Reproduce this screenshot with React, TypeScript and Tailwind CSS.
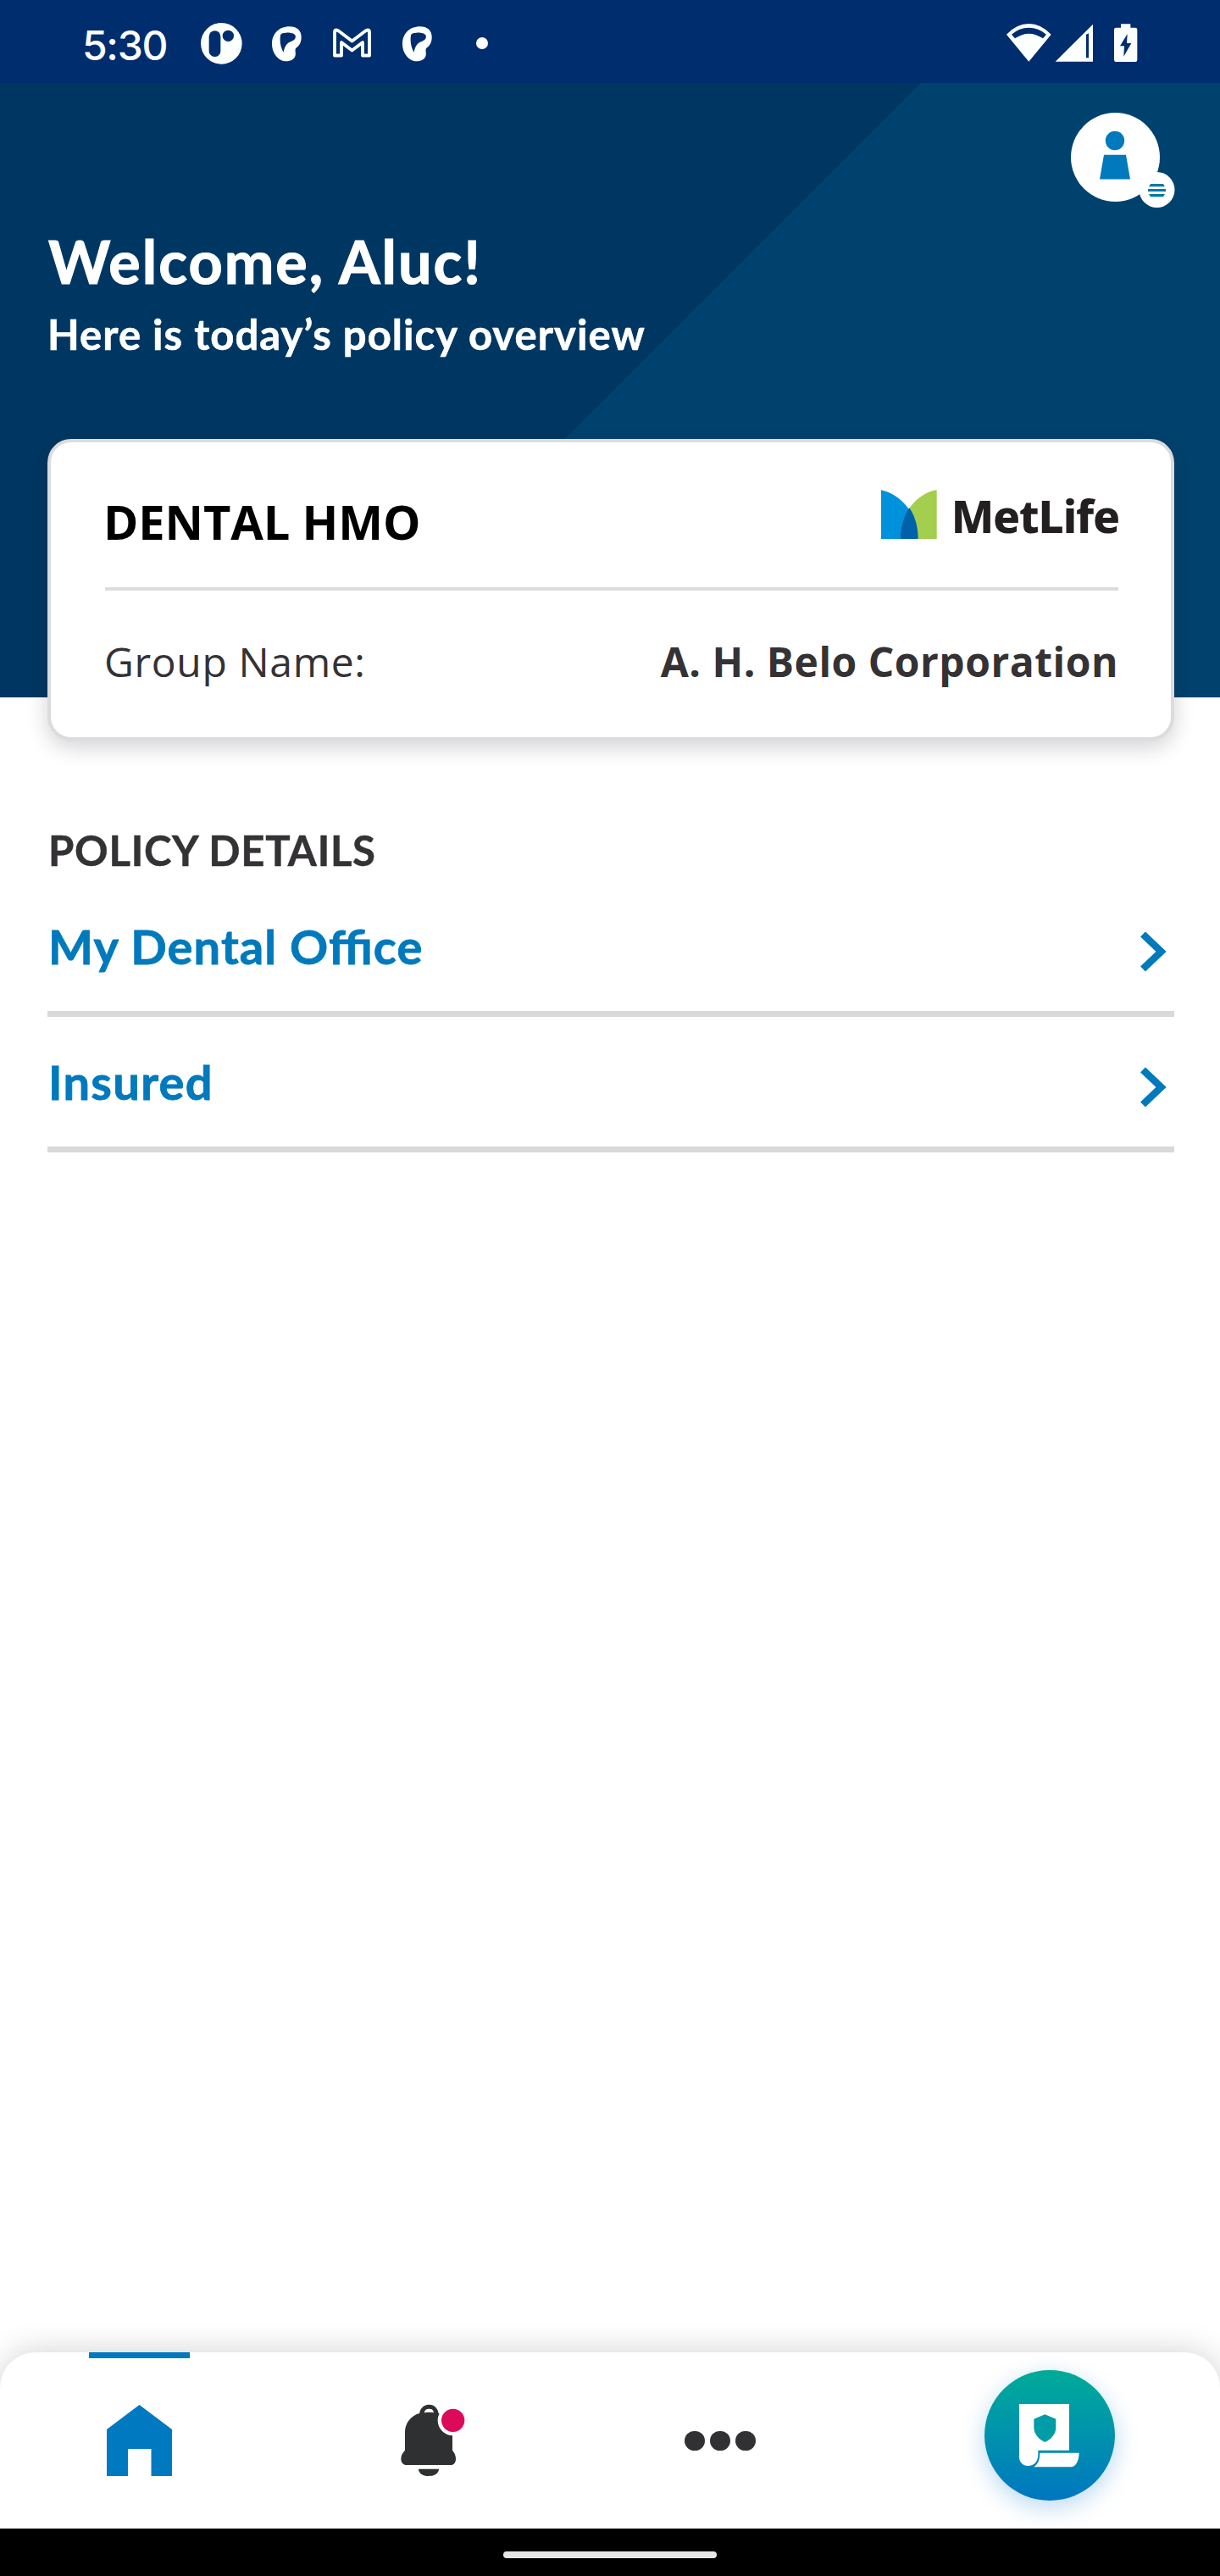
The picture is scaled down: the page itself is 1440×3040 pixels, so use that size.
function PandoraIcon() {
  return (
    <svg className="ml-[41px] h-[98px] w-[50px]" viewBox="468 0 150 294" fill="#fbfffe">
      <circle cx="544" cy="154" r="73" />
      <rect x="500" y="109" width="41" height="92" rx="20" fill="#002d6d" />
      <circle cx="568" cy="127" r="20" fill="#002d6d" />
    </svg>
  );
}

function BlobIcon({ className }: { className: string }) {
  return (
    <svg className={className} viewBox="720 0 110 294">
      <path
        fill="#fbfffe"
        fillRule="evenodd"
        d="M785 94C812 94 827 108 827 132C827 152 818 164 808 170C803 175 808 184 806 196C803 210 790 217 773 217C748 217 723 190 723 155C723 120 748 94 785 94ZM753 124C750 146 753 168 764 185C768 160 778 151 792 146C804 142 808 135 806 126C802 118 787 115 773 116C762 116 756 118 753 124Z"
      />
    </svg>
  );
}

function GmailIcon() {
  return (
    <svg className="ml-[34.300px] h-[98px] w-[48px]" viewBox="391 0 48 98" fill="none">
      <path
        d="M395 65.5V37.5Q395 34.5 399 36L415.5 48.5L432 36Q436 34.5 436 37.5V65.5H428V50L415.5 59.5L403 50V65.5Z"
        stroke="#fbfffe"
        strokeWidth="3.8"
        strokeLinejoin="round"
      />
    </svg>
  );
}

function StatusBar() {
  return (
    <div className="flex h-[98px] shrink-0 items-center bg-[#002d6d] pl-[97px]">
      <div className="mt-[9px] w-[98px] text-[48px] leading-[60px] font-medium tracking-[-1.3px] whitespace-nowrap text-white">5:30</div>
      <PandoraIcon />
      <BlobIcon className="ml-[34px] h-[98px] w-[36.7px]" />
      <GmailIcon />
      <BlobIcon className="ml-[35.300px] h-[98px] w-[36.7px]" />
      <div className="mt-[4px] ml-[51px] size-[14px] rounded-full bg-white" />
      <svg className="mr-[94px] ml-auto h-[98px] w-[160px]" viewBox="78 0 480 294" fill="#fbfffe">
        <path fillRule="evenodd" d="M84 122Q120 84 163 84T242 122L163 218ZM102 122L114 136Q163 102 213 136L225 122Q198 98 163 98T102 122Z" />
        <path fillRule="evenodd" d="M390 86V218H257ZM366 122V205H375V118Z" />
        <path fillRule="evenodd" d="M489 85H523V98H540Q547 98 547 105V212Q547 219 540 219H472Q465 219 465 212V105Q465 98 472 98H489ZM512 120L486 163H501L499 200L526 153H510Z" />
      </svg>
    </div>
  );
}

function Avatar() {
  return (
    <svg className="mr-[53px] ml-auto block h-[113px] w-[124px]" viewBox="1263 133 124 113">
      <circle cx="1316.5" cy="185.5" r="52.5" fill="#fff" />
      <circle cx="1316" cy="166" r="11.2" fill="#0079bd" />
      <path d="M1303 182.700H1329L1334 211.500H1298Z" fill="#0079bd" />
      <circle cx="1365.500" cy="224" r="21" fill="#fff" />
      <path d="M1358 217H1373L1375 220.200H1356ZM1355 223H1376V226H1355ZM1356 229H1375L1373 232.200H1358Z" fill="#0079a8" />
    </svg>
  );
}

function MetLifeLogo() {
  return (
    <div className="-mr-[1px] flex h-[64px] items-center">
      <svg className="h-[58.700px] w-[65.700px]" viewBox="180 233 197 176">
        <path d="M180 234C240 245 311 310 311 409H180Z" fill="#0091dc" />
        <path d="M377 233C310 245 248 310 248 409H377Z" fill="#a4ce4e" />
        <path d="M280 297C300 327 311 364 311 409H248C248 366 259 327 280 297Z" fill="#0061ab" />
      </svg>
      <div className="mt-[3px] ml-[17px] font-['Noto_Sans',sans-serif] text-[53px] leading-[64px] font-extrabold tracking-[-1.150px] whitespace-nowrap text-[#231f20]">MetLife</div>
    </div>
  );
}

function PolicyCard() {
  return (
    <div className="relative mx-[56px] -mt-[305px] mr-[54px] h-[356px] rounded-[28px] border-4 border-[#dcdbde] bg-white pr-[62px] pl-[64px] font-['Open_Sans',sans-serif] shadow-[0_8px_24px_rgba(40,30,45,0.2)]">
      <div className="flex h-[171px] items-start justify-between pt-[53px]">
        <div className="-ml-[2px] pt-[2px] text-[56px] leading-[76px] font-bold tracking-[-0.15px] text-black">DENTAL HMO</div>
        <MetLifeLogo />
      </div>
      <div className="h-[4px] bg-[#dcdbde]" />
      <div className="flex justify-between pt-[52px] text-[48px] leading-[64px] tracking-[0.5px] text-[#343235]">
        <div className="-ml-[1px] tracking-[0.650px]">Group Name:</div>
        <div className="font-bold">A. H. Belo Corporation</div>
      </div>
    </div>
  );
}

function DetailRow({ label, className }: { label: string; className: string }) {
  return (
    <div className="flex h-[160px] items-center justify-between border-b-[7px] border-[#d9d9dc] pr-[7px] text-[#007abc]">
      <div className={className}>{label}</div>
      <svg className="mt-[12px] h-[50px] w-[34px]" viewBox="0 0 34 50" fill="none">
        <path d="M4 4.500L25.500 25L4 45.500" stroke="currentColor" strokeWidth="8.500" />
      </svg>
    </div>
  );
}

function BottomNav() {
  return (
    <nav className="relative flex h-[208px] shrink-0 items-start rounded-t-[42px] bg-white shadow-[0_0_38px_rgba(0,0,0,0.19)]">
      <div className="ml-[105px] flex w-[119px] flex-col items-center">
        <div className="h-[7px] w-full bg-[#0079c0]" />
        <svg className="mt-[55px] h-[84px] w-[77px]" viewBox="126 2838 77 84" fill="#0079c0">
          <path d="M164.500 2838L203 2867V2922H178.500V2890H151V2922H126V2867Z" />
        </svg>
      </div>
      <svg className="mt-[44px] ml-[226px] size-[120px]" viewBox="0 0 360 360" fill="#2f3032">
        <path d="M135 90C135 68 150 53 169 53S203 68 203 90Z" />
        <path d="M152 82Q154 68 169 68T186 82Q169 78 152 82Z" fill="#fff" />
        <path d="M135 84H203C235 95 252 120 252 150V215C258 222 264 232 264 245C264 258 257 267 246 267H90C78 267 70 258 70 245C70 232 76 224 84 215V150C84 120 105 92 135 84Z" />
        <path d="M132 281H204C204 295 190 306 168 306C146 306 132 295 132 281Z" />
        <circle cx="254" cy="109" r="54" fill="#fff" />
        <circle cx="254" cy="109" r="41" fill="#dd0a5c" />
      </svg>
      <div className="mt-[92.500px] ml-[238px] flex gap-[6.700px]">
        <div className="size-[23.500px] rounded-full bg-[#313033]" />
        <div className="size-[23.500px] rounded-full bg-[#313033]" />
        <div className="size-[23.500px] rounded-full bg-[#313033]" />
      </div>
      <div className="mt-[21px] mr-[124px] ml-auto size-[154px] rounded-full bg-linear-to-b from-[#00ab97] to-[#0076c0] shadow-[0_8px_28px_rgba(0,122,200,0.28)]">
        <svg className="size-[154px]" viewBox="96 81 462 462" fill="#fff">
          <path d="M219 201H396V365H286V378C286 405 272 420 250 420C232 420 219 408 219 388Z" />
          <path d="M292 374H431C431 400 420 424 400 424H270C285 415 292 400 292 374Z" />
          <path d="M310 238L349 254V285C349 308 330 328 310 336C290 328 271 308 271 285V254Z" fill="#009da6" />
        </svg>
      </div>
    </nav>
  );
}

export default function App() {
  return (
    <div className="flex h-[3040px] w-[1440px] flex-col overflow-hidden bg-white font-['Inter',sans-serif]">
      <StatusBar />
      <header className="h-[725px] shrink-0 bg-[linear-gradient(135deg,#003762_0%,#003762_49.980%,#00426e_50.020%,#00426e_100%)] bg-[length:1840px_725px] bg-[position:-196px_0] bg-no-repeat pt-[35px] font-['Lato',sans-serif] text-white">
        <Avatar />
        <h1 className="mt-[22px] ml-[57px] text-[70px] leading-[80px] font-bold tracking-[2.050px] [-webkit-text-stroke:1.2px_currentColor]">Welcome, Aluc!</h1>
        <p className="mt-[16px] ml-[56px] text-[49px] leading-[60px] font-bold tracking-[1.060px] [-webkit-text-stroke:0.6px_currentColor]">Here is today’s policy overview</p>
      </header>
      <PolicyCard />
      <main className="mt-[99px] mr-[54px] ml-[56px] flex-1 font-['Lato',sans-serif]">
        <h2 className="ml-[1px] h-[67px] text-[49px] leading-[60px] font-bold tracking-[0.750px] text-[#343235] [-webkit-text-stroke:0.5px_currentColor]">POLICY DETAILS</h2>
        <DetailRow label="My Dental Office" className="ml-[1px] text-[56px] leading-[70px] font-bold tracking-[1.080px] [-webkit-text-stroke:0.8px_currentColor] [font-feature-settings:'liga']" />
        <DetailRow label="Insured" className="ml-[1px] text-[56px] leading-[70px] font-bold tracking-[1.300px] [-webkit-text-stroke:0.8px_currentColor]" />
      </main>
      <BottomNav />
      <div className="relative flex h-[56px] shrink-0 justify-center bg-black pt-[27px]">
        <div className="h-[8px] w-[252px] rounded-full bg-[#e6e6e6]" />
      </div>
    </div>
  );
}
